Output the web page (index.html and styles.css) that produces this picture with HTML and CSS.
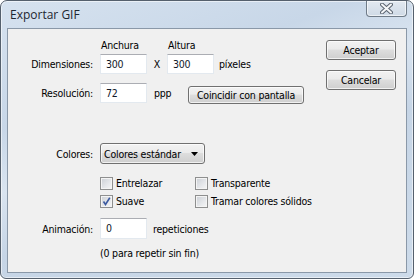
FILE: index.html
```html
<!DOCTYPE html>
<html lang="es">
<head>
<meta charset="utf-8">
<title>Exportar GIF</title>
<link rel="stylesheet" href="styles.css">
</head>
<body>
<div class="window">
  <div class="titlebar">
    <span class="title">Exportar GIF</span>
    <div class="close">
      <svg width="13" height="11" viewBox="0 0 13 11">
        <path d="M2 1.5 L11 9.5 M11 1.5 L2 9.5" stroke="#5b6470" stroke-width="4" stroke-linecap="round" fill="none"/>
        <path d="M2 1.5 L11 9.5 M11 1.5 L2 9.5" stroke="#f4f6f8" stroke-width="2" stroke-linecap="round" fill="none"/>
      </svg>
    </div>
  </div>
  <div class="client">
    <div class="form">
      <div class="row head">
        <span class="lbl"></span>
        <span class="colhead">Anchura</span>
        <span class="colhead">Altura</span>
      </div>
      <div class="row r-dim">
        <span class="lbl">Dimensiones:</span>
        <span class="input">300</span>
        <span class="x">X</span>
        <span class="input">300</span>
        <span class="unit">píxeles</span>
      </div>
      <div class="row r-res">
        <span class="lbl">Resolución:</span>
        <span class="input">72</span>
        <span class="ppp">ppp</span>
        <span class="btn btn-match">Coincidir con pantalla</span>
      </div>
      <div class="row r-col">
        <span class="lbl">Colores:</span>
        <span class="select">Colores estándar
          <svg class="arrow" width="7" height="4" viewBox="0 0 7 4"><path d="M0 0 H7 L3.5 4 Z" fill="#000"/></svg>
        </span>
      </div>
      <div class="row r-chk1">
        <span class="lbl"></span>
        <span class="chk"><span class="box"></span>Entrelazar</span>
        <span class="chk"><span class="box"></span>Transparente</span>
      </div>
      <div class="row r-chk2">
        <span class="lbl"></span>
        <span class="chk"><span class="box checked"><svg width="11" height="11" viewBox="0 0 11 11"><path d="M2.5 5.5 L4.5 8.5 L8.8 1.8" stroke="#3c5aa0" stroke-width="1.6" fill="none"/></svg></span>Suave</span>
        <span class="chk"><span class="box"></span>Tramar colores sólidos</span>
      </div>
      <div class="row r-anim">
        <span class="lbl">Animación:</span>
        <span class="input">0</span>
        <span class="unit2">repeticiones</span>
      </div>
      <div class="row r-note">
        <span class="lbl"></span>
        <span>(0 para repetir sin fin)</span>
      </div>
    </div>
    <div class="buttons">
      <span class="btn btn-main">Aceptar</span>
      <span class="btn btn-main">Cancelar</span>
    </div>
  </div>
</div>
</body>
</html>
```

FILE: styles.css
```css
html, body {
  margin: 0;
  background: #ffffff;
}
body {
  font: 10.5px "DejaVu Sans Condensed", "DejaVu Sans", sans-serif;
  letter-spacing: -0.2px;
  color: #000;
}
.window {
  width: 414px;
  height: 279px;
  box-sizing: border-box;
  border: 1px solid #55606d;
  border-radius: 7px 7px 6px 6px;
  background: linear-gradient(160deg, #d6e2ef 0%, #c8d7e8 30%, #d9e4f0 45%, #c6d5e6 60%, #cddbea 100%);
  display: flex;
  flex-direction: column;
  padding: 0 6px 5px 6px;
  box-shadow: inset 0 0 0 1px rgba(255,255,255,0.55);
}
.titlebar {
  height: 27px;
  display: flex;
  justify-content: space-between;
  align-items: flex-start;
  padding-left: 3px;
}
.title {
  font: 12px "Open Sans", "Noto Sans", sans-serif;
  letter-spacing: 0;
  color: #1e2630;
  margin-top: 6px;
  line-height: 16px;
}
.close {
  width: 41px;
  height: 16px;
  box-sizing: border-box;
  border: 1px solid #6f7b88;
  border-top: none;
  border-radius: 0 0 4px 4px;
  background: linear-gradient(#e2e9f1, #cfdae6);
  box-shadow: inset 0 0 0 1px rgba(255,255,255,0.6);
  display: flex;
  align-items: center;
  justify-content: center;
}
.client {
  flex: 1;
  border: 1px solid #8a98a8;
  background: #f0f0f0;
  display: flex;
}
.form {
  padding-top: 9px;
  display: flex;
  flex-direction: column;
}
.row {
  display: flex;
  align-items: center;
}
.lbl {
  width: 85px;
  margin-right: 7px;
  text-align: right;
  flex: none;
}
.head { height: 14px; }
.colhead {
  width: 66px;
  padding-left: 1px;
}
.r-dim { margin-top: 2px; height: 20px; }
.r-res { margin-top: 9px; height: 20px; align-items: flex-start; }
.r-res .lbl, .r-res .input, .r-res .ppp { align-self: center; }
.r-col { margin-top: 40px; height: 21px; }
.r-chk1 { margin-top: 12px; height: 14px; }
.r-chk2 { margin-top: 4px; height: 14px; }
.r-anim { margin-top: 10px; height: 21px; }
.r-note { margin-top: 7px; height: 14px; }

.input {
  width: 47px;
  height: 20px;
  box-sizing: border-box;
  background: #fff;
  border: 1px solid #e3e9ef;
  border-top-color: #abadb3;
  padding-left: 5px;
  line-height: 18px;
  color: #101828;
}
.r-anim .input { height: 21px; line-height: 19px; }
.x {
  width: 20px;
  text-align: center;
}
.unit { margin-left: 5px; }
.unit2 { margin-left: 6px; }
.ppp {
  width: 34px;
  padding-left: 7px;
}
.btn {
  box-sizing: border-box;
  border: 1px solid #707070;
  border-radius: 3px;
  background: linear-gradient(#f2f2f2 0%, #ebebeb 45%, #dddddd 50%, #cfcfcf 100%);
  box-shadow: inset 0 0 0 1px rgba(255,255,255,0.7);
  display: flex;
  align-items: center;
  justify-content: center;
  white-space: nowrap;
}
.btn-match {
  width: 116px;
  height: 18px;
  margin-top: 3px;
}
.select {
  width: 105px;
  height: 21px;
  box-sizing: border-box;
  border: 1px solid #707070;
  border-radius: 3px;
  background: linear-gradient(#f2f2f2 0%, #ebebeb 45%, #dddddd 50%, #cfcfcf 100%);
  box-shadow: inset 0 0 0 1px rgba(255,255,255,0.7);
  display: flex;
  align-items: center;
  padding-left: 3px;
  white-space: nowrap;
}
.select .arrow {
  margin-left: auto;
  margin-right: 6px;
}
.chk {
  width: 95px;
  display: flex;
  align-items: center;
  white-space: nowrap;
}
.box {
  width: 13px;
  height: 13px;
  box-sizing: border-box;
  border: 1px solid #8e8f8f;
  background: linear-gradient(135deg, #cbcfd5 0%, #e6e8eb 60%, #f6f6f6 100%);
  box-shadow: inset 0 0 0 1px #f4f4f4;
  margin-right: 3px;
  display: flex;
  align-items: center;
  justify-content: center;
  flex: none;
}
.buttons {
  margin-left: auto;
  margin-right: 10px;
  padding-top: 11px;
  display: flex;
  flex-direction: column;
  gap: 10px;
}
.btn-main {
  width: 70px;
  height: 20px;
}
```
